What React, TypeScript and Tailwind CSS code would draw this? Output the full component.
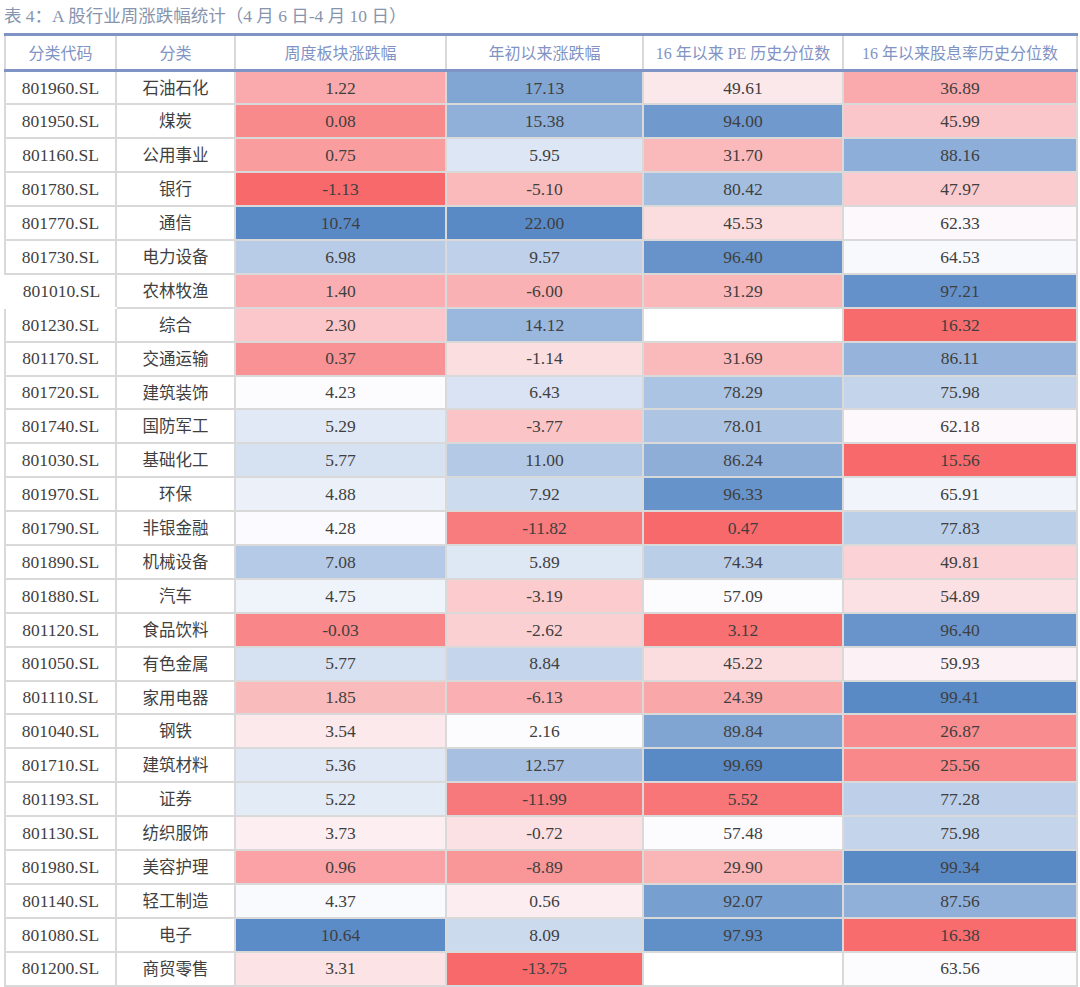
import React from "react";

type Row = {
  code: string;
  name: string;
  week: number;
  ytd: number;
  pe: number | null;
  dy: number;
};

const rows: Row[] = [
  { code: "801960.SL", name: "石油石化", week: 1.22, ytd: 17.13, pe: 49.61, dy: 36.89 },
  { code: "801950.SL", name: "煤炭", week: 0.08, ytd: 15.38, pe: 94.0, dy: 45.99 },
  { code: "801160.SL", name: "公用事业", week: 0.75, ytd: 5.95, pe: 31.7, dy: 88.16 },
  { code: "801780.SL", name: "银行", week: -1.13, ytd: -5.1, pe: 80.42, dy: 47.97 },
  { code: "801770.SL", name: "通信", week: 10.74, ytd: 22.0, pe: 45.53, dy: 62.33 },
  { code: "801730.SL", name: "电力设备", week: 6.98, ytd: 9.57, pe: 96.4, dy: 64.53 },
  { code: "801010.SL", name: "农林牧渔", week: 1.4, ytd: -6.0, pe: 31.29, dy: 97.21 },
  { code: "801230.SL", name: "综合", week: 2.3, ytd: 14.12, pe: null, dy: 16.32 },
  { code: "801170.SL", name: "交通运输", week: 0.37, ytd: -1.14, pe: 31.69, dy: 86.11 },
  { code: "801720.SL", name: "建筑装饰", week: 4.23, ytd: 6.43, pe: 78.29, dy: 75.98 },
  { code: "801740.SL", name: "国防军工", week: 5.29, ytd: -3.77, pe: 78.01, dy: 62.18 },
  { code: "801030.SL", name: "基础化工", week: 5.77, ytd: 11.0, pe: 86.24, dy: 15.56 },
  { code: "801970.SL", name: "环保", week: 4.88, ytd: 7.92, pe: 96.33, dy: 65.91 },
  { code: "801790.SL", name: "非银金融", week: 4.28, ytd: -11.82, pe: 0.47, dy: 77.83 },
  { code: "801890.SL", name: "机械设备", week: 7.08, ytd: 5.89, pe: 74.34, dy: 49.81 },
  { code: "801880.SL", name: "汽车", week: 4.75, ytd: -3.19, pe: 57.09, dy: 54.89 },
  { code: "801120.SL", name: "食品饮料", week: -0.03, ytd: -2.62, pe: 3.12, dy: 96.4 },
  { code: "801050.SL", name: "有色金属", week: 5.77, ytd: 8.84, pe: 45.22, dy: 59.93 },
  { code: "801110.SL", name: "家用电器", week: 1.85, ytd: -6.13, pe: 24.39, dy: 99.41 },
  { code: "801040.SL", name: "钢铁", week: 3.54, ytd: 2.16, pe: 89.84, dy: 26.87 },
  { code: "801710.SL", name: "建筑材料", week: 5.36, ytd: 12.57, pe: 99.69, dy: 25.56 },
  { code: "801193.SL", name: "证券", week: 5.22, ytd: -11.99, pe: 5.52, dy: 77.28 },
  { code: "801130.SL", name: "纺织服饰", week: 3.73, ytd: -0.72, pe: 57.48, dy: 75.98 },
  { code: "801980.SL", name: "美容护理", week: 0.96, ytd: -8.89, pe: 29.9, dy: 99.34 },
  { code: "801140.SL", name: "轻工制造", week: 4.37, ytd: 0.56, pe: 92.07, dy: 87.56 },
  { code: "801080.SL", name: "电子", week: 10.64, ytd: 8.09, pe: 97.93, dy: 16.38 },
  { code: "801200.SL", name: "商贸零售", week: 3.31, ytd: -13.75, pe: null, dy: 63.56 },
];

const RED = [248, 105, 107];
const WHITE = [252, 252, 255];
const BLUE = [90, 138, 198];

// red - white - blue scale, midpoint at the median, as a spreadsheet does it
function makeScale(values: number[]) {
  const sorted = [...values].sort((a, b) => a - b);
  const min = sorted[0];
  const max = sorted[sorted.length - 1];
  const n = sorted.length;
  const mid =
    n % 2 ? sorted[(n - 1) / 2] : (sorted[n / 2 - 1] + sorted[n / 2]) / 2;
  return (v: number) => {
    let from = WHITE;
    let to = BLUE;
    let t = 0;
    if (v <= mid) {
      from = RED;
      to = WHITE;
      t = mid === min ? 1 : (v - min) / (mid - min);
    } else {
      t = max === mid ? 0 : (v - mid) / (max - mid);
    }
    const c = from.map((f, i) => Math.round(f + (to[i] - f) * t));
    return `rgb(${c[0]}, ${c[1]}, ${c[2]})`;
  };
}

const weekColor = makeScale(rows.map((r) => r.week));
const ytdColor = makeScale(rows.map((r) => r.ytd));
const peColor = makeScale(
  rows.filter((r) => r.pe !== null).map((r) => r.pe as number),
);
const dyColor = makeScale(rows.map((r) => r.dy));

const headers = [
  "分类代码",
  "分类",
  "周度板块涨跌幅",
  "年初以来涨跌幅",
  "16 年以来 PE 历史分位数",
  "16 年以来股息率历史分位数",
];

const cell = "border-2 border-[#d9d9d9] p-0 text-center align-middle";

export default function App() {
  return (
    <div className="min-h-[987px] w-[1080px] bg-white px-[4px] font-['Liberation_Serif','Noto_Sans_CJK_SC',serif] text-[#3f3f3f]">
      <div className="flex h-[33px] items-center pt-[1px] pb-[2px] text-[17.5px] text-[#8794ad]">
        表 4：A 股行业周涨跌幅统计（4 月 6 日-4 月 10 日）
      </div>
      <table className="w-[1072px] table-fixed border-collapse">
        <colgroup>
          <col className="w-[111px]" />
          <col className="w-[119px]" />
          <col className="w-[211px]" />
          <col className="w-[197px]" />
          <col className="w-[200px]" />
          <col className="w-[234px]" />
        </colgroup>
        <thead>
          <tr className="h-[36px] border-y-[3px] border-[#7f94c4]">
            {headers.map((h) => (
              <th
                key={h}
                className="border-x-2 border-x-[#d9d9d9] p-0 pt-[2px] text-center align-middle text-[16px] font-normal text-[#8093c4]"
              >
                {h}
              </th>
            ))}
          </tr>
        </thead>
        <tbody className="text-[17.5px]">
          {rows.map((r, i) => {
            const odd = i === 6;
            return (
              <tr key={r.code} className="h-[33.9px]">
                <td
                  className={
                    odd
                      ? "border-y-2 border-r-2 border-l-0 border-[#d9d9d9] border-b-white p-0 pl-[3px] text-center align-middle"
                      : cell
                  }
                >
                  {r.code}
                </td>
                <td className={`${cell} pt-[3px] text-[16.5px]`}>{r.name}</td>
                <td className={cell} style={{ backgroundColor: weekColor(r.week) }}>
                  {r.week.toFixed(2)}
                </td>
                <td className={cell} style={{ backgroundColor: ytdColor(r.ytd) }}>
                  {r.ytd.toFixed(2)}
                </td>
                <td
                  className={cell}
                  style={{
                    backgroundColor: r.pe === null ? "#ffffff" : peColor(r.pe),
                  }}
                >
                  {r.pe === null ? "" : r.pe.toFixed(2)}
                </td>
                <td className={cell} style={{ backgroundColor: dyColor(r.dy) }}>
                  {r.dy.toFixed(2)}
                </td>
              </tr>
            );
          })}
        </tbody>
      </table>
    </div>
  );
}
